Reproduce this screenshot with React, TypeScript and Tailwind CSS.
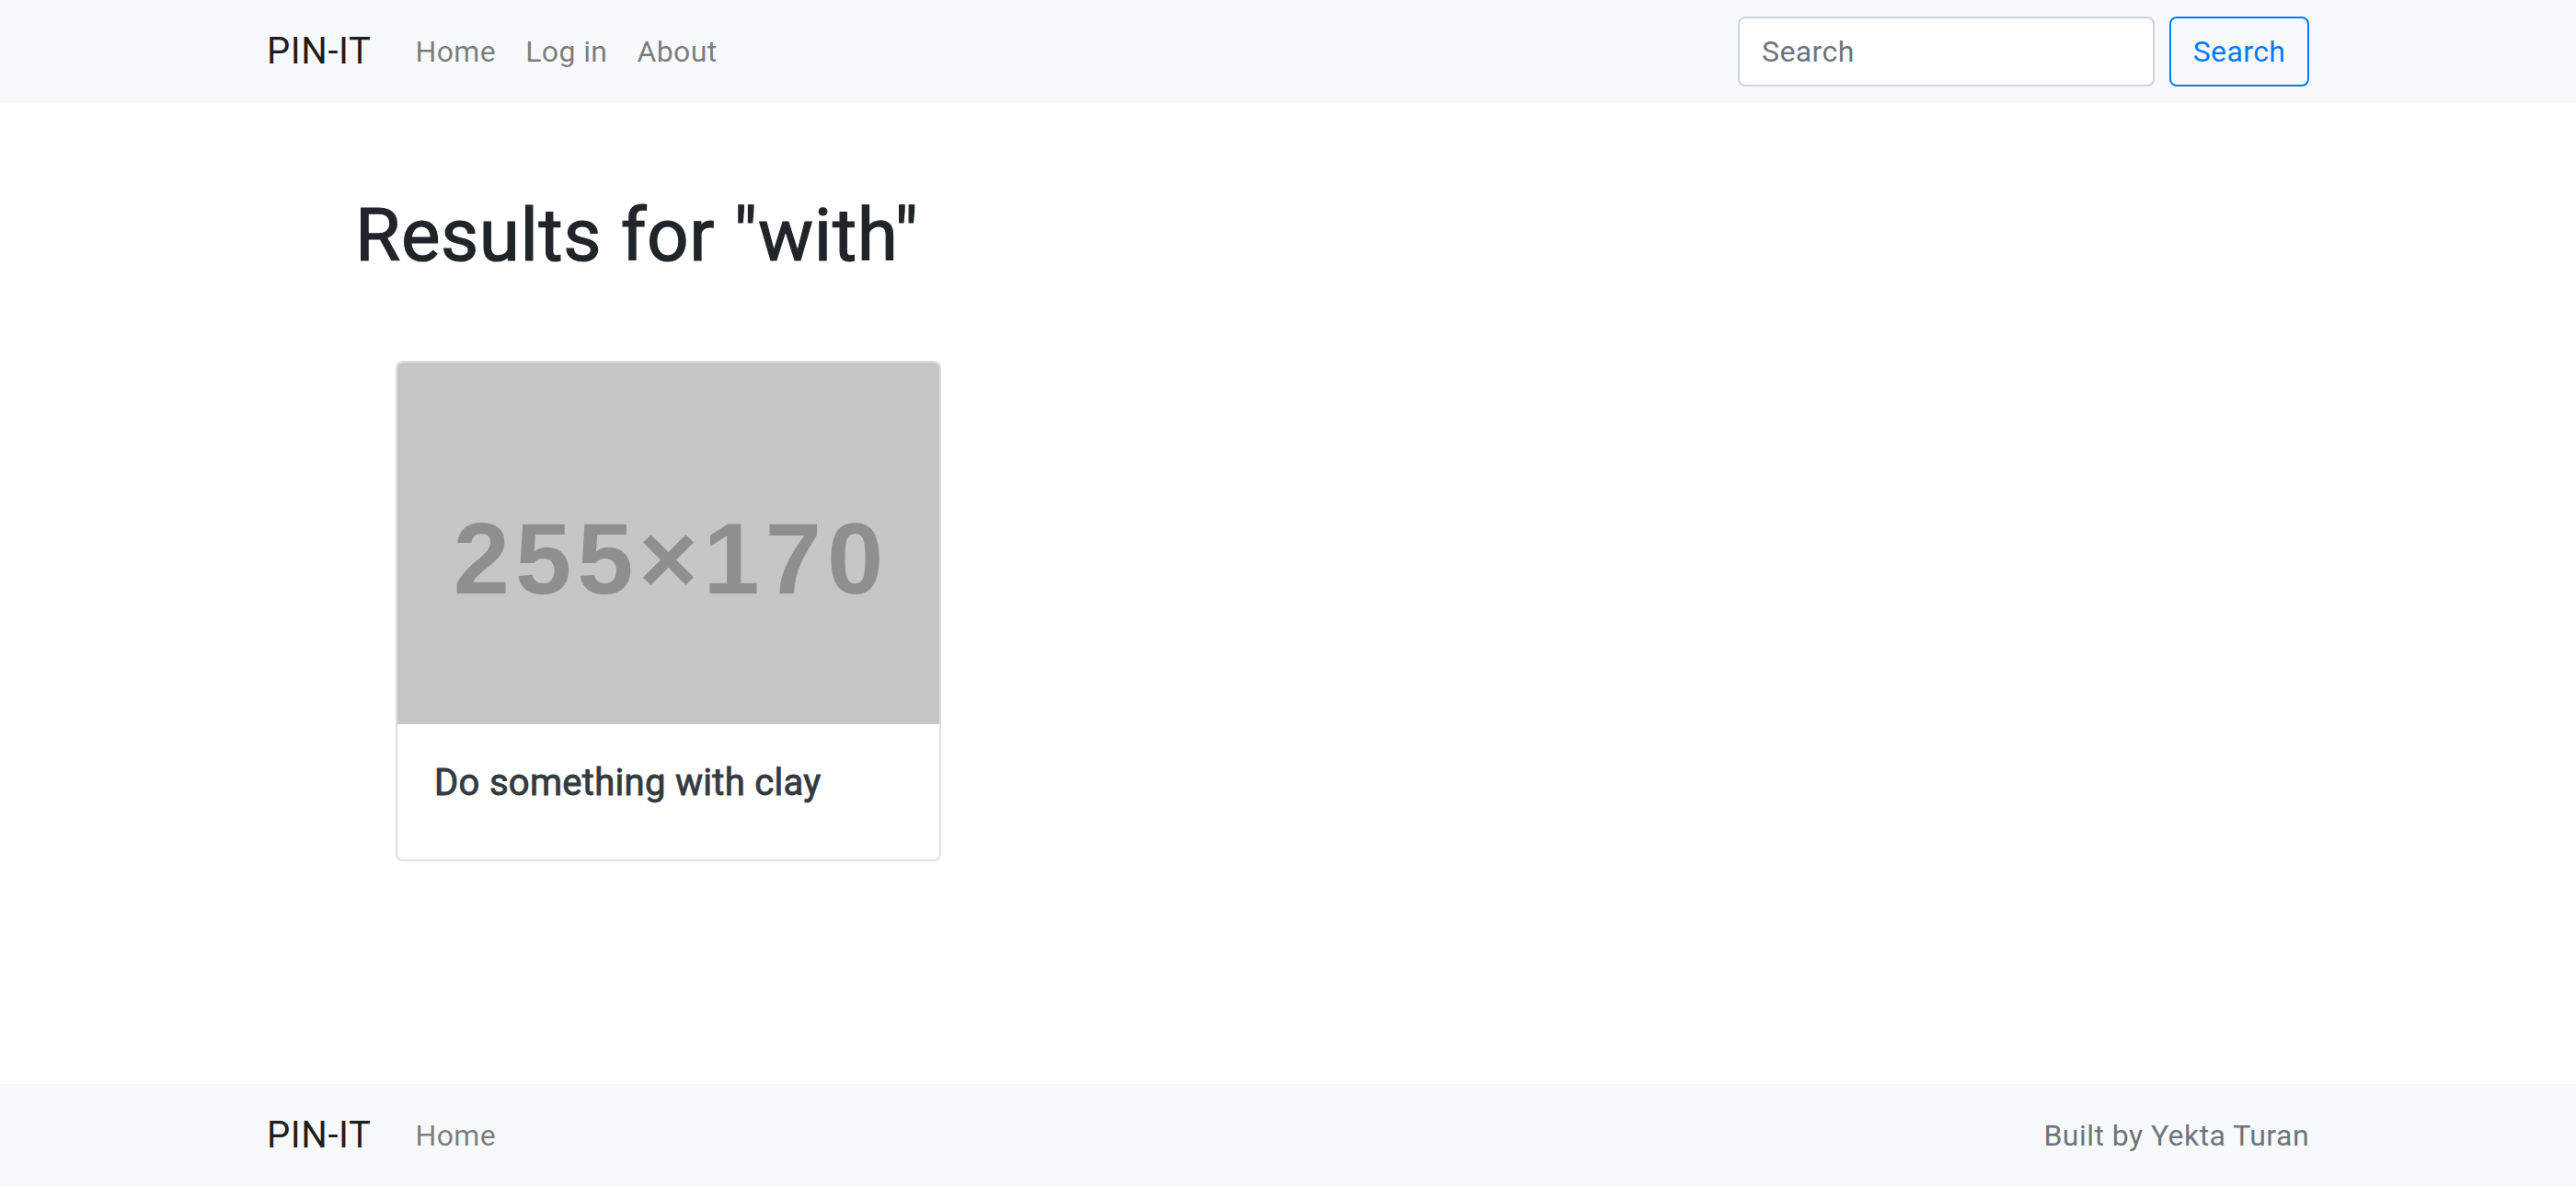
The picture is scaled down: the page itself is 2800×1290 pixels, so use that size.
import React from 'react';

const font = { fontFamily: 'Roboto, "Liberation Sans", sans-serif' };

function NavBar() {
    return (
        <nav className="bg-[#f8f9fa] h-[112px] flex items-center">
            <div className="w-[2280px] mx-auto px-[30px] flex items-center justify-between">
                <div className="flex items-center">
                    <a className="text-[40px] leading-[1.5] tracking-[0.6px] text-[rgba(0,0,0,0.9)] mr-[32px]">PIN-IT</a>
                    <a className="text-[32px] leading-[1.5] tracking-[0.4px] text-[rgba(0,0,0,0.5)] px-[16px]">Home</a>
                    <a className="text-[32px] leading-[1.5] tracking-[0.4px] text-[rgba(0,0,0,0.5)] px-[16px]">Log in</a>
                    <a className="text-[32px] leading-[1.5] tracking-[0.4px] text-[rgba(0,0,0,0.5)] px-[16px]">About</a>
                </div>
                <form className="flex items-center">
                    <input
                        placeholder="Search"
                        className="w-[453px] h-[76px] bg-white border-2 border-[#ced4da] rounded-[8px] px-[24px] text-[32px] tracking-[0.4px] text-[#495057] placeholder:text-[#6c757d] mr-[16px] outline-none"
                    />
                    <button
                        type="button"
                        className="h-[76px] w-[152px] border-2 border-[#007bff] rounded-[8px] text-[32px] tracking-[0.4px] text-[#007bff]"
                    >
                        Search
                    </button>
                </form>
            </div>
        </nav>
    );
}

function ResultCard({ title }: { title: string }) {
    return (
        <div className="w-[593px] bg-white border-2 border-[rgba(0,0,0,0.125)] rounded-[8px] overflow-hidden">
            <div className="h-[393px] bg-[#c6c6c6] flex items-center justify-center">
                <span
                    className="text-[110px] font-bold tracking-[6px] text-[#8f8f8f] leading-none pt-[32px] pl-[6px]"
                    style={{ fontFamily: '"Liberation Sans", Arial, sans-serif' }}
                >
                    255×170
                </span>
            </div>
            <div className="p-[40px]">
                <h5 className="text-[40px] font-normal leading-[1.2] tracking-[0.3px] text-[#343a40] [-webkit-text-stroke:0.9px_#343a40] mb-[19px]">
                    {title}
                </h5>
            </div>
        </div>
    );
}

function Footer() {
    return (
        <footer className="bg-[#f8f9fa] h-[112px] flex items-center">
            <div className="w-[2280px] mx-auto px-[30px] flex items-center justify-between">
                <div className="flex items-center">
                    <a className="text-[40px] leading-[1.5] tracking-[0.6px] text-[rgba(0,0,0,0.9)] mr-[32px]">PIN-IT</a>
                    <a className="text-[32px] leading-[1.5] tracking-[0.4px] text-[rgba(0,0,0,0.5)] px-[16px]">Home</a>
                </div>
                <span className="text-[32px] leading-[1.5] tracking-[0.45px] text-[#6c757d]">Built by Yekta Turan</span>
            </div>
        </footer>
    );
}

export default function App() {
    return (
        <div className="min-h-screen flex flex-col bg-white text-[#212529]" style={font}>
            <NavBar />
            <main className="flex-1">
                <div className="w-[2280px] mx-auto px-[30px]">
                    <h1 className="ml-[96px] mt-[96px] text-[80px] font-normal leading-[1.2] tracking-[0.6px] [-webkit-text-stroke:1.2px_#212529]">
                        Results for "with"
                    </h1>
                    <div className="ml-[140px] mt-[88px]">
                        <ResultCard title="Do something with clay" />
                    </div>
                </div>
            </main>
            <Footer />
        </div>
    );
}
